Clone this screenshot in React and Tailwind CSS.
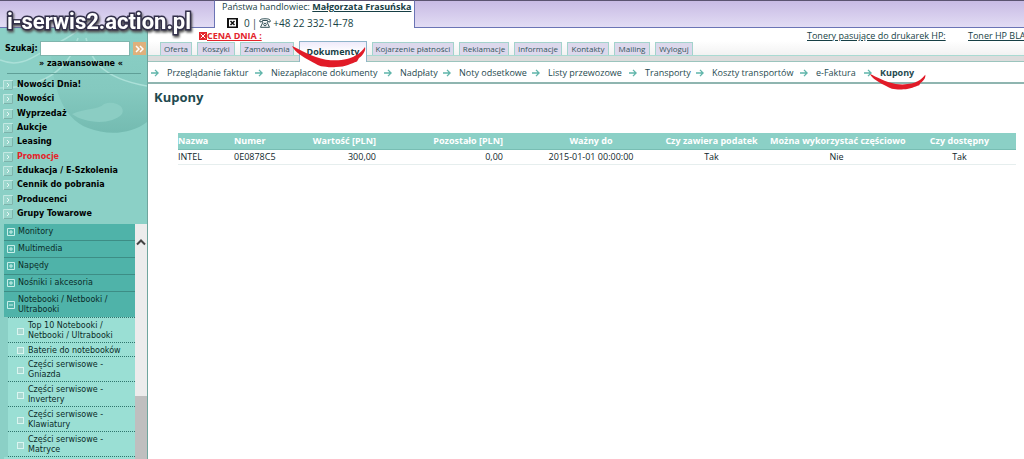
import { X } from 'lucide-react'

const MENU = [
  { label: 'Nowości Dnia!' },
  { label: 'Nowości' },
  { label: 'Wyprzedaż' },
  { label: 'Aukcje' },
  { label: 'Leasing' },
  { label: 'Promocje', hot: true },
  { label: 'Edukacja / E-Szkolenia' },
  { label: 'Cennik do pobrania' },
  { label: 'Producenci' },
  { label: 'Grupy Towarowe' },
]

const GROUPS = ['Monitory', 'Multimedia', 'Napędy', 'Nośniki i akcesoria']

const SUBGROUPS = [
  { label: 'Top 10 Notebooki / Netbooki / Ultrabooki', height: 'h-[25px]' },
  { label: 'Baterie do notebooków', height: 'h-[14px]' },
  { label: 'Części serwisowe - Gniazda', height: 'h-[25px]' },
  { label: 'Części serwisowe - Invertery', height: 'h-[25px]' },
  { label: 'Części serwisowe - Klawiatury', height: 'h-[25px]' },
  { label: 'Części serwisowe - Matryce', height: 'h-[25px]' },
]

const TABS = [
  { label: 'Oferta', width: 'w-8' },
  { label: 'Koszyki', width: 'w-[38px]' },
  { label: 'Zamówienia', width: 'w-[54px]' },
  { label: 'Dokumenty', width: 'w-[68px]', active: true },
  { label: 'Kojarzenie płatności', width: 'w-[82px]' },
  { label: 'Reklamacje', width: 'w-[50px]' },
  { label: 'Informacje', width: 'w-12' },
  { label: 'Kontakty', width: 'w-[42px]' },
  { label: 'Mailing', width: 'w-9' },
  { label: 'Wyloguj', width: 'w-[38px]' },
]

const LINKS = [
  { label: 'Przeglądanie faktur', width: 'w-[104px]' },
  { label: 'Niezapłacone dokumenty', width: 'w-[129px]' },
  { label: 'Nadpłaty', width: 'w-[59px]' },
  { label: 'Noty odsetkowe', width: 'w-[89px]' },
  { label: 'Listy przewozowe', width: 'w-[97px]' },
  { label: 'Transporty', width: 'w-[67px]' },
  { label: 'Koszty transportów', width: 'w-[104px]' },
  { label: 'e-Faktura', width: 'w-16' },
  { label: 'Kupony', width: 'w-[60px]', active: true },
]

const COLUMNS = [
  { label: 'Nazwa', width: 'w-[56px]', align: 'text-left' },
  { label: 'Numer', width: 'w-[62px]', align: 'text-left' },
  { label: 'Wartość [PLN]', width: 'w-[106px]', align: 'text-right pr-[26px]' },
  { label: 'Pozostało [PLN]', width: 'w-[127px]', align: 'text-right pr-[26px]' },
  { label: 'Ważny do', width: 'w-[124px]', align: 'text-center' },
  { label: 'Czy zawiera podatek', width: 'w-[117px]', align: 'text-center' },
  { label: 'Można wykorzystać częściowo', width: 'w-[133px]', align: 'text-center' },
  { label: 'Czy dostępny', width: 'w-[113px]', align: 'text-center' },
]

const COUPONS = [
  ['INTEL', '0E0878C5', '300,00', '0,00', '2015-01-01 00:00:00', 'Tak', 'Nie', 'Tak'],
]

function Arrow() {
  return (
    <svg viewBox="0 0 9 9" className="h-2 w-2 shrink-0" fill="none" stroke="#5fb5aa" strokeWidth="1.5">
      <path d="M0 4.5h8M4.500 1L8 4.500 4.500 8" />
    </svg>
  )
}

function MenuIcon() {
  return (
    <svg viewBox="0 0 10 10" className="h-[10px] w-[10px] shrink-0" fill="#9ad6cc" stroke="#c3e9e3">
      <path d="M.5 .5h9v9h-9z" />
      <path d="M4 3l2 2-2 2" fill="none" stroke="#e6f7f4" />
      <path d="M1 9.500h8.500V1" stroke="#7db3ab" fill="none" />
    </svg>
  )
}

function TreeIcon({ open }) {
  return (
    <svg viewBox="0 0 8 8" className="h-2 w-2 shrink-0" fill="none" stroke="#c8efe9">
      <path d="M.5 .5h7v7h-7z" />
      <path d="M2 4h4" />
      {!open && <path d="M4 2v4" />}
    </svg>
  )
}

function PhoneIcon() {
  return (
    <svg viewBox="0 0 12 10" className="h-[10px] w-3 shrink-0" fill="none" stroke="#2f4f55">
      <path d="M1 4C0 1 3 .8 6 .8S12 1 11 4L8.500 3.500V2.500H3.500V3.500Z" />
      <path d="M4 4L1.500 9.300H10.500L8 4" />
      <circle cx="6" cy="6.500" r="1.300" />
    </svg>
  )
}

function Underline({ className }) {
  return (
    <svg viewBox="0 0 74 24" preserveAspectRatio="none" className={className} fill="#e11b28" aria-hidden="true">
      <path d="M0 0C8 4 20 12 34 15C48 17 58 14 63 11C68 8 71 4 73 1C74 5 71 10 67 13L65 17C59 19 54 23 44 23C37 24 33 22 29 22C24 20 22 18 18 16C11 12 3 7 0 0Z" />
    </svg>
  )
}

function Header() {
  return (
    <header className="flex h-7 shrink-0 bg-[#6b74b5] font-['Open_Sans','Noto_Sans',sans-serif]">
      <div className="mb-px w-[214px] border-t border-[#5b5470] bg-linear-to-b from-[#c8bbe4] to-[#e2dcf4]" />
      <div className="w-[201px] border-x border-t border-[#6b74b5] border-t-[#5b5470] bg-white pl-[7px] text-[#173f45]">
        <p className="text-[9px] leading-3 whitespace-nowrap">
          Państwa handlowiec: <a href="#" className="font-bold underline">Małgorzata Frasuńska</a>
        </p>
        <p className="flex items-center pt-[5px] pl-[5px] text-[10px] leading-[10px] whitespace-nowrap">
          <svg viewBox="0 0 11 10" className="h-[10px] w-[11px] shrink-0" aria-hidden="true">
            <path d="M0 0h11v10H0z" fill="#111" />
            <path d="M2 1.500h7v7H2z" fill="#fff" />
            <path d="M3.500 3l4 4M7.500 3l-4 4" stroke="#111" strokeWidth="1.500" />
          </svg>
          <span className="pl-1.5">0</span>
          <span className="px-0.5">|</span>
          <PhoneIcon />
          <span className="pl-0.5">+48 22 332-14-78</span>
        </p>
      </div>
      <div className="mb-px flex-1 border-t border-[#5b5470] bg-linear-to-b from-[#c8bbe4] to-[#e2dcf4]" />
    </header>
  )
}

function Swirl() {
  return (
    <svg viewBox="0 0 147 110" className="absolute top-0 right-0 h-[110px] w-[147px]" fill="none" aria-hidden="true">
      <defs>
        <linearGradient id="bubble" x1="0" y1="0" x2="0" y2="1">
          <stop offset="0" stopColor="#8bd0c6" />
          <stop offset="0.6" stopColor="#84c9bf" />
          <stop offset="1" stopColor="#74bbb1" />
        </linearGradient>
      </defs>
      <path d="M50 0H147V94C132 106 108 108 88 100C62 90 50 60 50 0Z" fill="url(#bubble)" />
      <path d="M72 86C86 80 98 82 104 76C114 72 126 78 122 86C112 97 86 96 72 86Z" fill="#8bcdc3" />
      <path d="M0 32C24 42 38 24 60 14C70 8 78 4 80 0M0 60C28 60 66 52 78 10M86 10C90 30 100 50 147 58" stroke="#abe0d8" strokeWidth="1.500" />
    </svg>
  )
}

function Sidebar() {
  return (
    <aside className="relative flex w-[148px] shrink-0 flex-col overflow-hidden border-r border-[#6fa59d] bg-[#8bd0c6] font-['DejaVu_Sans',sans-serif] text-black">
      <Swirl />
      <div className="relative h-[46px] shrink-0 pt-[13px]">
        <form className="flex h-[15px] items-center pl-[5px] text-[8px]">
          <label htmlFor="search" className="w-[35px] font-bold">Szukaj:</label>
          <input id="search" type="text" className="h-[15px] w-[90px] border border-[#7fb5ad] bg-white px-1" />
          <button type="button" aria-label="Szukaj" className="ml-[3px] flex h-[13px] w-[13px] items-center justify-center bg-[#dfb07c] text-white">
            <svg viewBox="0 0 9 8" className="h-2 w-[9px]" fill="none" stroke="currentColor" strokeWidth="1.500">
              <path d="M1 1l3 3-3 3M5 1l3 3-3 3" />
            </svg>
          </button>
        </form>
        <a href="#" className="block pl-[15px] text-center text-[8px] leading-4 font-bold">» zaawansowane «</a>
        <hr className="mt-px mr-1.5 ml-[7px] border-[#5f9f97]" />
      </div>
      <ul className="relative mt-1 mb-[3px] grid h-[143px] shrink-0 grid-rows-10 pl-[3px] text-[8px] font-bold">
        {MENU.map((item) => (
          <li key={item.label} className="flex items-center gap-1 whitespace-nowrap">
            <MenuIcon />
            <a href="#" className={item.hot ? 'text-[#e3242b]' : ''}>{item.label}</a>
          </li>
        ))}
      </ul>
      <div className="relative flex min-h-0 flex-1 pl-1 text-[8px] leading-[10px] text-[#0a2b28]">
        <div className="flex-1 overflow-hidden bg-[#9adfd4]">
          <ul className="bg-[#4fb3a9]">
            {GROUPS.map((label) => (
              <li key={label} className="flex h-[17px] items-center gap-[3px] border-b border-[#3d8d85] pl-[3px]">
                <TreeIcon />
                <a href="#">{label}</a>
              </li>
            ))}
            <li className="flex h-[25px] items-center gap-[3px] pl-[3px]">
              <TreeIcon open />
              <a href="#">Notebooki / Netbooki / Ultrabooki</a>
            </li>
          </ul>
          <ul className="border-l-4 border-[#8bd0c6]">
            {SUBGROUPS.map((item) => (
              <li key={item.label} className={`flex items-center gap-1 border-t border-dotted border-t-[#2f756d] pt-0.5 pl-[9px] ${item.height}`}>
                <span className="h-[7px] w-[7px] shrink-0 border border-[#d9f5f0] bg-[#a9d8d1]" />
                <a href="#">{item.label}</a>
              </li>
            ))}
            <li className="border-t border-dotted border-t-[#2f756d]" />
          </ul>
        </div>
        <div className="flex w-3 flex-col items-center bg-[#ececec]">
          <svg viewBox="0 0 10 8" className="mt-[14px] h-2 w-[10px]" fill="none" stroke="#444" strokeWidth="2">
            <path d="M1 6.500l4-4 4 4" />
          </svg>
          <div className="mt-auto h-[63px] w-full bg-[#bfbfbf]" />
        </div>
      </div>
    </aside>
  )
}

function Tabs() {
  return (
    <nav className="border-b border-[#9bc4bd] bg-linear-to-b from-white to-[#ececec]">
      <ul className="flex h-[14px] items-end gap-[5px] pl-3 text-[8px] text-[#35565c]">
        {TABS.map((tab) =>
          tab.active ? (
            <li key={tab.label} className={`relative z-10 -mb-[7px] flex h-[21px] items-center justify-center border border-b-0 border-[#8fb3c9] bg-linear-to-b from-[#eeeafa] to-white to-50% text-[9px] font-bold text-[#173f45] ${tab.width}`}>
              <a href="#">{tab.label}</a>
              <Underline className="absolute top-1 -left-2 h-[22px] w-[74px] max-w-none" />
            </li>
          ) : (
            <li key={tab.label} className={`flex h-[13px] items-center justify-center border border-b-0 border-[#a3d3cc] bg-[#dcd8ec] whitespace-nowrap ${tab.width}`}>
              <a href="#">{tab.label}</a>
            </li>
          )
        )}
      </ul>
      <div className="h-1.5 border-t border-[#a9dad2] bg-[#dcdcdc]" />
    </nav>
  )
}

function CouponTable() {
  return (
    <table className="w-full table-fixed border-collapse text-[9px] whitespace-nowrap">
      <thead>
        <tr className="h-4 border-b border-[#78bdb3] bg-[#8bd0c6] text-white">
          {COLUMNS.map((col) => (
            <th key={col.label} scope="col" className={`font-bold ${col.width} ${col.align}`}>{col.label}</th>
          ))}
        </tr>
      </thead>
      <tbody>
        {COUPONS.map((row) => (
          <tr key={row[1]} className="h-[15px] border-b border-[#e6eeee] text-[#10282c]">
            {row.map((value, i) => (
              <td key={i} className={COLUMNS[i].align}>{value}</td>
            ))}
          </tr>
        ))}
      </tbody>
    </table>
  )
}

export default function App() {
  return (
    <div className="relative flex h-screen flex-col overflow-hidden bg-white">
      <Header />
      <a href="#" className="absolute top-1.5 left-[7px] z-20 font-['Roboto','Liberation_Sans',sans-serif] text-[22px] leading-8 font-bold text-white [paint-order:stroke_fill] [-webkit-text-stroke:3px_#33304a] drop-shadow-[1px_2px_1px_#555]">
        i-serwis2.action.pl
      </a>
      <div className="flex min-h-0 flex-1">
        <Sidebar />
        <main className="min-w-0 flex-1 overflow-hidden font-['Open_Sans','Noto_Sans',sans-serif]">
          <div className="flex h-[13px] items-end text-[9px] leading-[10px] whitespace-nowrap">
            <a href="#" className="ml-[51px] flex items-center font-bold text-[#e3242b] underline">
              <X className="h-2 w-2 bg-[#e3242b] text-white" strokeWidth={3} />
              CENA DNIA :
            </a>
            <a href="#" className="ml-auto w-[161px] text-[#173f45] underline">Tonery pasujące do drukarek HP:</a>
            <a href="#" className="w-14 text-[#173f45] underline">Toner HP BLA</a>
          </div>
          <Tabs />
          <ul className="flex h-[22px] items-center border-b-2 border-[#8fb5b0] pt-px pl-[3px] text-[9px] text-[#1f4a50]">
            {LINKS.map((link) => (
              <li key={link.label} className={`relative flex shrink-0 items-center gap-2 whitespace-nowrap ${link.width}`}>
                <Arrow />
                <a href="#" className={link.active ? 'font-bold' : ''}>{link.label}</a>
                {link.active && <Underline className="absolute top-2 left-1.5 h-4 w-14 max-w-none" />}
              </li>
            ))}
          </ul>
          <h1 className="pt-1 pl-1.5 text-[13px] leading-[18px] font-bold text-[#1f4a50]">Kupony</h1>
          <div className="mt-[27px] mr-2 ml-[30px]">
            <CouponTable />
          </div>
        </main>
      </div>
    </div>
  )
}
